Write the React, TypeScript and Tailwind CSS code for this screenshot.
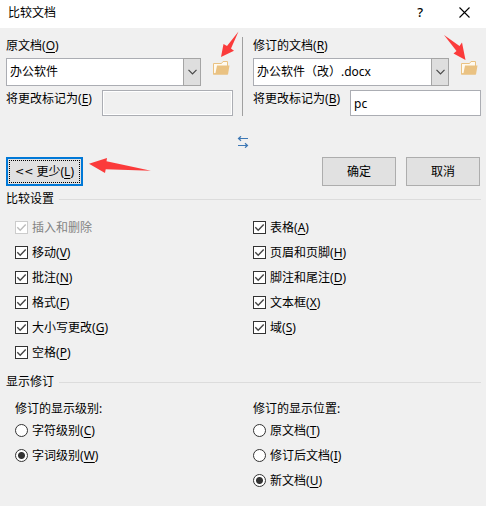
import { useState } from "react";
import type { ReactNode } from "react";

interface Option {
  text: string;
  accel?: string;
  disabled?: boolean;
}

const leftChecks: Option[] = [
  { text: "插入和删除", disabled: true },
  { text: "移动", accel: "V" },
  { text: "批注", accel: "N" },
  { text: "格式", accel: "F" },
  { text: "大小写更改", accel: "G" },
  { text: "空格", accel: "P" },
];

const rightChecks: Option[] = [
  { text: "表格", accel: "A" },
  { text: "页眉和页脚", accel: "H" },
  { text: "脚注和尾注", accel: "D" },
  { text: "文本框", accel: "X" },
  { text: "域", accel: "S" },
];

const levels: Option[] = [
  { text: "字符级别", accel: "C" },
  { text: "字词级别", accel: "W" },
];

const places: Option[] = [
  { text: "原文档", accel: "T" },
  { text: "修订后文档", accel: "I" },
  { text: "新文档", accel: "U" },
];

function Caption({ text, accel }: { text: string; accel?: string }) {
  return (
    <span>
      {text}
      {accel && (
        <>
          (<span className="underline underline-offset-2">{accel}</span>)
        </>
      )}
    </span>
  );
}

function FolderButton({ label }: { label: string }) {
  return (
    <button type="button" aria-label={label} className="block">
      <svg width="17" height="14" viewBox="0 0 17 14">
        <path
          d="M.5 13V2.5h8l1.5-2h4.5V13z"
          fill="#fffaf0"
          stroke="#eac282"
        />
        <path d="M4 4.5H16.5L15 13.5H0V12.5L2.5 12z" fill="#eac282" />
      </svg>
    </button>
  );
}

interface DocumentSourceProps {
  id: string;
  title: string;
  accel: string;
  file: string;
  author: string;
  authorAccel: string;
  disabled?: boolean;
  pointer: ReactNode;
}

function DocumentSource(props: DocumentSourceProps) {
  const { id, title, accel, file, author, authorAccel, disabled, pointer } = props;
  return (
    <>
      <label htmlFor={`${id}-file`} className="block h-[18px]">
        <Caption text={title} accel={accel} />
      </label>
      <div className="mt-[3px] flex items-center">
        <div className="relative h-7 min-w-0 flex-1">
          <select
            id={`${id}-file`}
            className="h-full w-full appearance-none border border-[#abadb3] bg-white pr-5 pl-[3px] outline-none"
          >
            <option>{file}</option>
          </select>
          <span className="pointer-events-none absolute inset-y-0 right-0 flex w-[18px] items-center justify-center border border-[#a5a5a5] bg-[#dedede]">
            <svg width="9" height="6" viewBox="0 0 9 6">
              <path d="M.5 .8l4 4 4-4" fill="none" stroke="#484848" strokeWidth="1.2" />
            </svg>
          </span>
        </div>
        <div className="relative mr-[3px] mb-2 ml-3">
          <FolderButton label={`浏览${title}`} />
          {pointer}
        </div>
      </div>
      <div className="mt-1 flex">
        <label htmlFor={`${id}-author`} className="h-[18px] flex-1 whitespace-nowrap">
          <Caption text="将更改标记为" accel={authorAccel} />
        </label>
        <input
          id={`${id}-author`}
          type="text"
          defaultValue={author}
          disabled={disabled}
          className="h-[26px] w-[131px] border border-[#abadb3] bg-white px-[3px] outline-none disabled:bg-[#f0f0f0] disabled:shadow-[inset_0_0_0_1px_#fff]"
        />
      </div>
    </>
  );
}

function CheckRow({ option }: { option: Option }) {
  const [checked, setChecked] = useState(true);
  return (
    <label
      className={`flex h-[25px] items-center gap-1 ${option.disabled ? "text-[#838383]" : ""}`}
    >
      <span className="relative block size-[13px]">
        <input
          type="checkbox"
          checked={checked}
          disabled={option.disabled}
          onChange={(e) => setChecked(e.target.checked)}
          className="block size-[13px] appearance-none border border-[#333] bg-white disabled:border-[#ccc]"
        />
        {checked && (
          <svg
            className="pointer-events-none absolute inset-0"
            width="13"
            height="13"
            viewBox="0 0 13 13"
          >
            <path
              d="M2.3 6.3l2.9 2.9 5.5-5.6"
              fill="none"
              stroke={option.disabled ? "#bbb" : "#444"}
              strokeWidth="1.4"
            />
          </svg>
        )}
      </span>
      <Caption text={option.text} accel={option.accel} />
    </label>
  );
}

interface RadioGroupProps {
  name: string;
  title: string;
  options: Option[];
  initial: string;
}

function RadioGroup({ name, title, options, initial }: RadioGroupProps) {
  const [value, setValue] = useState(initial);
  return (
    <fieldset>
      <legend className="h-[18px]">{title}</legend>
      {options.map((option) => (
        <label key={option.text} className="flex h-[25px] items-center gap-1">
          <input
            type="radio"
            name={name}
            checked={value === option.text}
            onChange={() => setValue(option.text)}
            className="size-[13px] appearance-none rounded-full border border-[#333] bg-white checked:bg-[radial-gradient(circle,#333_3px,#fff_4px)]"
          />
          <Caption text={option.text} accel={option.accel} />
        </label>
      ))}
    </fieldset>
  );
}

function SectionTitle({ children }: { children: ReactNode }) {
  return (
    <div className="flex h-[18px] items-center gap-[5px] pr-[5px] pl-1.5">
      <h2>{children}</h2>
      <div className="h-px flex-1 bg-[#dcdcdc]" />
    </div>
  );
}

export default function App() {
  return (
    <div className="min-h-screen bg-[#f0f0f0] font-['Noto_Sans','Noto_Sans_CJK_SC',sans-serif] text-[12px] leading-[18px] text-black">
      <header className="flex h-7 items-center bg-white pr-4 pb-1 pl-2">
        <h1 className="flex-1 pt-0.5">比较文档</h1>
        <button type="button" aria-label="帮助" className="mr-9 text-[13px] font-medium">
          ?
        </button>
        <button type="button" aria-label="关闭">
          <svg width="11" height="11" viewBox="0 0 11 11">
            <path d="M.5 .5l10 10M10.5 .5l-10 10" stroke="#000" strokeWidth="1.1" />
          </svg>
        </button>
      </header>

      <form onSubmit={(e) => e.preventDefault()}>
        <div className="mt-[9px] grid grid-cols-2">
          <div className="border-r border-[#a0a0a0] pr-[9px] pl-1.5">
            <DocumentSource
              id="original"
              title="原文档"
              accel="O"
              file="办公软件"
              author=""
              authorAccel="E"
              disabled
              pointer={
                <svg
                  className="pointer-events-none absolute bottom-full left-2"
                  width="18"
                  height="30"
                  viewBox="0 0 18 30"
                >
                  <path d="M0 26L2.5 13l3.5 2L17.5 .5 10 17.5l3 2.2z" fill="#fb3b3b" />
                </svg>
              }
            />
          </div>
          <div className="pr-[5px] pl-2.5">
            <DocumentSource
              id="revised"
              title="修订的文档"
              accel="R"
              file="办公软件（改）.docx"
              author="pc"
              authorAccel="B"
              pointer={
                <svg
                  className="pointer-events-none absolute right-3 bottom-full"
                  width="22"
                  height="26"
                  viewBox="0 0 22 26"
                >
                  <path d="M0 0l15.5 11 2.5-3.5 3.5 17.5-12-6.5 3-2.5z" fill="#fb3b3b" />
                </svg>
              }
            />
          </div>
        </div>

        <div className="mt-5 flex justify-center">
          <button type="button" aria-label="交换文档">
            <svg width="12" height="12" viewBox="0 0 12 12" className="block">
              <path
                d="M1.5 2.5H11M4 .3L1.5 2.5 4 4.7M1 9.5h9.5M8 7.3l2.5 2.2L8 11.7"
                fill="none"
                stroke="#3d78b5"
                strokeWidth="1.2"
              />
            </svg>
          </button>
        </div>

        <div className="mt-[9px] flex gap-2.5 pr-1.5 pl-1.5">
          <div className="relative mr-auto">
            <button
              type="button"
              className="block h-[29px] w-[77px] border-2 border-[#0078d7] bg-[#e1e1e1] p-px"
            >
              <span className="flex h-full items-center justify-center gap-[3px] border border-dotted border-black">
                <span className="font-['DejaVu_Sans',sans-serif] text-[11px]">&lt;&lt;</span>
                <Caption text="更少" accel="L" />
              </span>
            </button>
            <svg
              className="pointer-events-none absolute top-0 left-full ml-1.5"
              width="63"
              height="17"
              viewBox="0 0 63 17"
            >
              <path d="M0 6.7L18 1l-.5 3.3L62 13.7 16.7 12.3 16 16z" fill="#fb3b3b" />
            </svg>
          </div>
          <button type="submit" className="h-[29px] w-[74px] border border-[#adadad] bg-[#e1e1e1]">
            确定
          </button>
          <button type="button" className="h-[29px] w-[74px] border border-[#adadad] bg-[#e1e1e1]">
            取消
          </button>
        </div>

        <div className="mt-1">
          <SectionTitle>比较设置</SectionTitle>
        </div>
        <div className="mt-[7px] grid grid-cols-2">
          <div className="pl-[15px]">
            {leftChecks.map((option) => (
              <CheckRow key={option.text} option={option} />
            ))}
          </div>
          <div className="pl-2.5">
            {rightChecks.map((option) => (
              <CheckRow key={option.text} option={option} />
            ))}
          </div>
        </div>

        <div className="mt-2">
          <SectionTitle>显示修订</SectionTitle>
        </div>
        <div className="mt-[9px] grid grid-cols-2">
          <div className="pl-[15px]">
            <RadioGroup name="level" title="修订的显示级别:" options={levels} initial="字词级别" />
          </div>
          <div className="pl-2.5">
            <RadioGroup name="place" title="修订的显示位置:" options={places} initial="新文档" />
          </div>
        </div>
      </form>
    </div>
  );
}
